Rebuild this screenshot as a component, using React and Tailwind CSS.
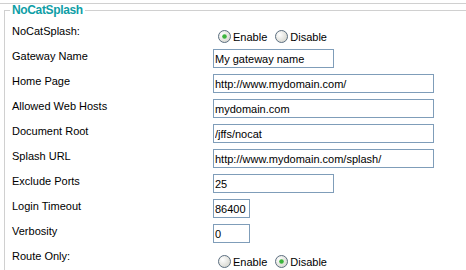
import React from "react";

function Radio({ checked }) {
  return (
    <svg width="13" height="13" viewBox="0 0 13 13" className="shrink-0">
      <defs>
        <radialGradient id={checked ? "rg1" : "rg0"} cx="0.35" cy="0.35" r="0.75">
          <stop offset="0" stopColor="#ffffff" />
          <stop offset="1" stopColor="#d4d4cc" />
        </radialGradient>
      </defs>
      <circle cx="6.5" cy="6.5" r="6" fill={`url(#${checked ? "rg1" : "rg0"})`} stroke="#5c6f80" strokeWidth="1" />
      {checked && <circle cx="6.5" cy="6.5" r="2.3" fill="#3cb43c" />}
    </svg>
  );
}

function RadioPair({ enabled }) {
  return (
    <div className="flex items-center pt-[2px] pl-[5px]">
      <Radio checked={enabled} />
      <span className="ml-[2px]">Enable</span>
      <span className="ml-[8px]"><Radio checked={!enabled} /></span>
      <span className="ml-[2px]">Disable</span>
    </div>
  );
}

function Field({ value, width }) {
  return (
    <div className="pt-[1px]">
      <input
        readOnly
        value={value}
        className={`${width} h-[19px] border border-[#7f9db9] bg-white px-[1px] text-[11px] text-black outline-none`}
        style={{ fontFamily: "inherit" }}
      />
    </div>
  );
}

const rows = [
  { label: "Gateway Name", value: "My gateway name", w: "w-[121px]" },
  { label: "Home Page", value: "http://www.mydomain.com/", w: "w-[221px]" },
  { label: "Allowed Web Hosts", value: "mydomain.com", w: "w-[221px]" },
  { label: "Document Root", value: "/jffs/nocat", w: "w-[221px]" },
  { label: "Splash URL", value: "http://www.mydomain.com/splash/", w: "w-[221px]" },
  { label: "Exclude Ports", value: "25", w: "w-[121px]" },
  { label: "Login Timeout", value: "86400", w: "w-[37px]" },
  { label: "Verbosity", value: "0", w: "w-[37px]" },
];

export default function App() {
  return (
    <div
      className="w-[466px] h-[270px] overflow-hidden bg-white text-[11px] leading-[14px] text-black"
      style={{ fontFamily: '"Liberation Sans", Arial, sans-serif' }}
    >
      <div className="mt-[3px] w-[480px] border-t border-[#d0d0d0]">
        <fieldset className="ml-[4px] mt-[-1px] w-[500px] border border-[#d0d0d0] pl-[5px] pb-4">
          <legend className="px-[2px] text-[12px] font-bold tracking-[-0.35px] text-[#0e9ea6] leading-[14px]">
            NoCatSplash
          </legend>
          <div className="pl-[2px] pt-[6px]">
            <div className="flex h-[25px]">
              <div className="w-[201px] pt-[1px]">NoCatSplash:</div>
              <RadioPair enabled />
            </div>
            {rows.map((r) => (
              <div key={r.label} className="flex h-[25px]">
                <div className="w-[201px] pt-[1px]">{r.label}</div>
                <Field value={r.value} width={r.w} />
              </div>
            ))}
            <div className="flex h-[25px]">
              <div className="w-[201px] pt-[1px]">Route Only:</div>
              <RadioPair enabled={false} />
            </div>
          </div>
        </fieldset>
      </div>
    </div>
  );
}
